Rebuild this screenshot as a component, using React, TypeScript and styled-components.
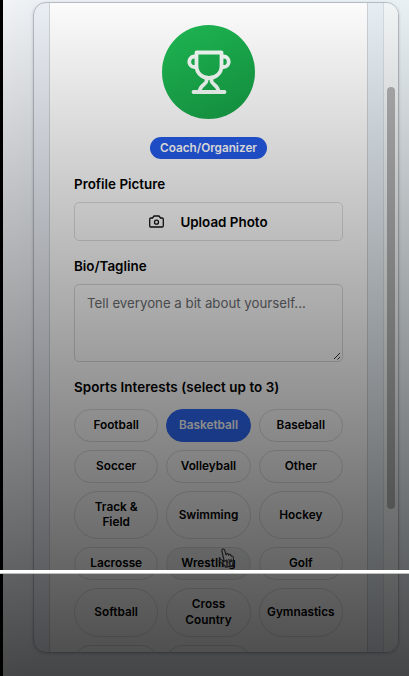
import React from "react";
import styled, { createGlobalStyle } from "styled-components";

const Global = createGlobalStyle`
  * { box-sizing: border-box; }
  body { margin: 0; overflow: hidden; font-family: Inter, "Liberation Sans", sans-serif; color: #000; }
`;

const Page = styled.main`
  position: relative;
  width: 409px;
  height: 676px;
  overflow: hidden;
  padding: 2px 10px 23px 33px;
  background: linear-gradient(90deg, #f5f7f9, #eff3f7 8%, #ecf3f7);
`;

const Frame = styled.section`
  display: flex;
  width: 366px;
  height: 651px;
  overflow: hidden;
  border: 1px solid #b9bec4;
  border-radius: 13px;
  background: linear-gradient(90deg, #edf1f8, #e9f1f7);
  box-shadow: 0 1px 3px rgba(0, 0, 0, 0.18);
`;

const Card = styled.div`
  display: flex;
  flex-direction: column;
  flex: none;
  width: 319px;
  height: 680px;
  margin-left: 15px;
  padding: 22px 24px 0;
  border: 1px solid #cfd4d8;
  border-top: 0;
  background: #fff;
`;

const Track = styled.div`
  flex: none;
  width: 15px;
  margin-left: 15px;
  padding: 84px 3px 0;
  border-left: 1px solid #d8dee3;
  background: #f5f8f9;
`;

const Thumb = styled.div`
  width: 8px;
  height: 422px;
  border-radius: 4px;
  background: #b4b4b4;
`;

const Avatar = styled.div`
  display: grid;
  place-items: center;
  align-self: center;
  flex: none;
  width: 93px;
  height: 94px;
  border-radius: 50%;
  background: linear-gradient(135deg, #1fbd55, #16a046);
`;

const Badge = styled.span`
  align-self: center;
  flex: none;
  height: 22px;
  margin-top: 18px;
  padding: 0 10.2px;
  border-radius: 11px;
  background: #245bea;
  color: #fff;
  font-size: 11.75px;
  font-weight: 600;
  line-height: 22px;
`;

const Label = styled.label<{ $gap: number; $spacing?: number }>`
  display: block;
  flex: none;
  height: 18px;
  margin-top: ${(p) => p.$gap}px;
  font-size: 13.4px;
  font-weight: 560;
  letter-spacing: ${(p) => p.$spacing ?? 0}px;
  line-height: 18px;
  white-space: nowrap;
`;

const Upload = styled.button`
  display: flex;
  align-items: center;
  justify-content: center;
  gap: 16px;
  flex: none;
  height: 39px;
  margin-top: 9px;
  padding: 0;
  border: 1px solid #dcdfe0;
  border-radius: 5px;
  background: transparent;
  color: #000;
  font: 560 13.4px Inter, sans-serif;
`;

const Bio = styled.div`
  display: flex;
  justify-content: space-between;
  flex: none;
  height: 78px;
  margin-top: 9px;
  padding: 9px 0 0 12px;
  border: 1px solid #d8dbdc;
  border-radius: 5px;
  color: #6c6e72;
  font-size: 13.25px;
  line-height: 18px;
  white-space: nowrap;
`;

const Grip = styled.svg`
  align-self: flex-end;
`;

const Pills = styled.div`
  display: grid;
  grid-template-columns: repeat(3, 1fr);
  grid-template-rows: 33px 33px 48.5px 33px 48.5px 33px;
  gap: 8px;
  margin-top: 12.5px;
`;

const Pill = styled.button<{ $state?: "selected" | "hover" }>`
  padding: 1px 0 0;
  border: 1px solid ${(p) => (p.$state === "selected" ? "#2e6af8" : "#dcdfe1")};
  border-radius: 25px;
  background: ${(p) => (p.$state === "selected" ? "#2e6af8" : p.$state === "hover" ? "#f2f3f4" : "transparent")};
  color: ${(p) => (p.$state === "selected" ? "#fff" : "#000")};
  font: 600 11.8px/15.5px Inter, sans-serif;
  white-space: pre-line;
`;

const Shade = styled.div`
  position: absolute;
  inset: 0;
  background: linear-gradient(rgba(0, 0, 0, 0.01), rgba(0, 0, 0, 0.715));
`;

const LeftEdge = styled.div`
  position: absolute;
  inset: 0 auto 0 0;
  width: 3px;
  background: #000;
`;

const Progress = styled.div`
  position: absolute;
  top: 570px;
  left: 0;
  right: 0;
  height: 4px;
  border-bottom: 1px solid #bfc1c1;
  background: #fff;
`;

const Pointer = styled.svg`
  position: absolute;
  left: 218px;
  top: 548px;
`;

const sports: { name: string; state?: "selected" | "hover" }[] = [
  { name: "Football" },
  { name: "Basketball", state: "selected" },
  { name: "Baseball" },
  { name: "Soccer" },
  { name: "Volleyball" },
  { name: "Other" },
  { name: "Track &\nField" },
  { name: "Swimming" },
  { name: "Hockey" },
  { name: "Lacrosse" },
  { name: "Wrestling", state: "hover" },
  { name: "Golf" },
  { name: "Softball" },
  { name: "Cross\nCountry" },
  { name: "Gymnastics" },
  { name: "" },
  { name: "" },
];

const Trophy = () => (
  <svg width="44" height="46" viewBox="0 0 44 46" fill="none" stroke="#f8fffa" strokeWidth="3.8" strokeLinecap="round" strokeLinejoin="round">
    <path d="M9.5 3.5H34.5V17C34.5 24 29 29 22 29S9.5 24 9.5 17ZM9.5 7.5H7.5C.5 7.5.5 18 7.5 18H9.5M34.5 7.5h2c7 0 7 10.5 0 10.5h-2" />
    <path d="M19.5 29.5V32C19.5 35.5 12.5 36 12.5 43M24.5 29.5V32C24.5 35.5 31.5 36 31.5 43M6.5 43H37.5" />
  </svg>
);

const Camera = () => (
  <svg width="15" height="13" viewBox="0 0 15 13" fill="none" stroke="#111" strokeWidth="1.3" strokeLinejoin="round">
    <path d="M5 1h5l1.5 2H13q1.3 0 1.3 1.3v6.4Q14.3 12 13 12H2Q.7 12 .7 10.7V4.3Q.7 3 2 3h1.5Z" />
    <circle cx="7.5" cy="7.2" r="2" />
  </svg>
);

export default function App() {
  return (
    <Page>
      <Global />
      <Frame>
        <Card>
          <Avatar><Trophy /></Avatar>
          <Badge>Coach/Organizer</Badge>
          <Label $gap={16}>Profile Picture</Label>
          <Upload><Camera />Upload Photo</Upload>
          <Label $gap={16}>Bio/Tagline</Label>
          <Bio>
            Tell everyone a bit about yourself...
            <Grip width="9" height="9" viewBox="0 0 9 9" stroke="#333" strokeWidth="1">
              <path d="M1 7 7 1M4.5 7.5 7 5" />
            </Grip>
          </Bio>
          <Label $gap={16} $spacing={0.06}>Sports Interests (select up to 3)</Label>
          <Pills>
            {sports.map((s, i) => (
              <Pill key={i} $state={s.state}>{s.name}</Pill>
            ))}
          </Pills>
        </Card>
        <Track><Thumb /></Track>
      </Frame>
      <Shade />
      <Pointer width="17" height="20" viewBox="0 0 17 20" fill="#777" fillOpacity=".25" stroke="#181818" strokeWidth="1.1" strokeLinejoin="round">
        <path d="M6 12 4 3.5Q3.5 1.3 5.2 1 6.4.8 6.9 2.8L8.1 7q.2-1.7 1.7-1.4l.8 1.6q.8-1.6 2.1-.3l.3 1.3q1.9-.8 2.3 1.3.8 4-.7 6.2l.2 2.2-7.4 1.2-1-2L1.5 13.4Q.5 11.6 2 11.2q1.2-.2 4 2.5Z" />
        <path d="m8.7 11.4.8 3.6m1.3-4 .8 3.6m1.3-4 .7 3.4" />
      </Pointer>
      <LeftEdge />
      <Progress />
    </Page>
  );
}
